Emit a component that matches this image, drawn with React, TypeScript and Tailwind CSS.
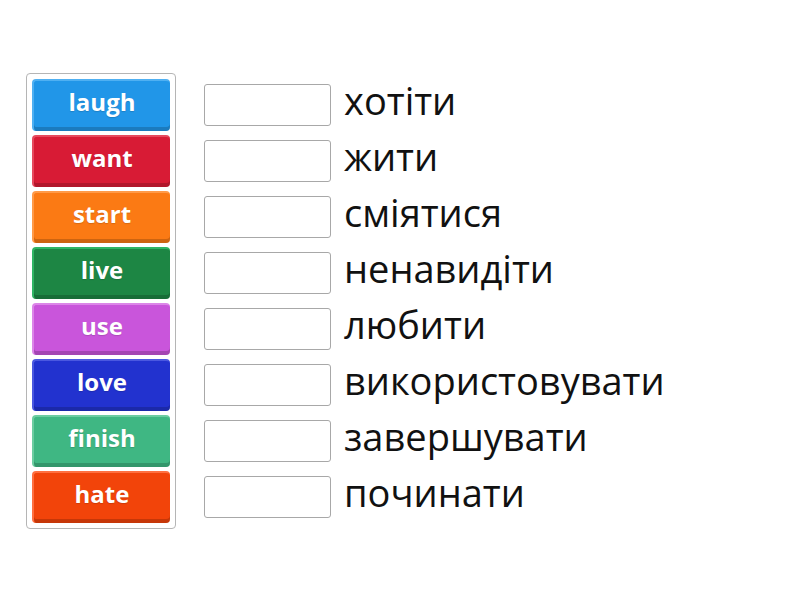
import React from "react";

const items = [
  { w: "laugh", bg: "bg-[#2196e8]", hi: "border-[#4fb0f2]" },
  { w: "want", bg: "bg-[#d81b35]", hi: "border-[#e64a5e]" },
  { w: "start", bg: "bg-[#fb7a14]", hi: "border-[#ff9a48]" },
  { w: "live", bg: "bg-[#1d8644]", hi: "border-[#2fb564]" },
  { w: "use", bg: "bg-[#c955db]", hi: "border-[#dc86e8]" },
  { w: "love", bg: "bg-[#2232cf]", hi: "border-[#4a58e0]" },
  { w: "finish", bg: "bg-[#3fb783]", hi: "border-[#6ccda1]" },
  { w: "hate", bg: "bg-[#f2440a]", hi: "border-[#ff7040]" },
];

const words = [
  "хотіти",
  "жити",
  "сміятися",
  "ненавидіти",
  "любити",
  "використовувати",
  "завершувати",
  "починати",
];

export default function App() {
  return (
    <div className="w-[800px] h-[600px] bg-white relative" style={{ fontFamily: '"Open Sans", sans-serif' }}>
      <div className="flex pt-[73px] pl-[26px]">
        <div className="w-[150px] border border-[#b5b5b5] rounded-[4px] p-[5px] flex flex-col gap-[4px]">
          {items.map((it) => (
            <div
              key={it.w}
              className={`h-[52px] rounded-[4px] ${it.bg} border-t-2 border-l-2 ${it.hi} shadow-[inset_0_-4px_0_rgba(0,0,0,0.18)] flex items-center justify-center text-white font-bold text-[24px] leading-none`}
            >
              <span className="-mt-[8px] [text-shadow:0_1px_1px_rgba(0,0,0,0.15)]">{it.w}</span>
            </div>
          ))}
        </div>
        <div className="ml-[28px] pt-[11px] flex flex-col gap-[14px]">
          {words.map((w) => (
            <div key={w} className="flex items-center h-[42px]">
              <div className="w-[127px] h-[42px] border border-[#a8a8a8] rounded-[3px] bg-white shrink-0" />
              <div className="ml-[13px] text-[38px] text-[#111] leading-none -mt-[11px]">{w}</div>
            </div>
          ))}
        </div>
      </div>
    </div>
  );
}
